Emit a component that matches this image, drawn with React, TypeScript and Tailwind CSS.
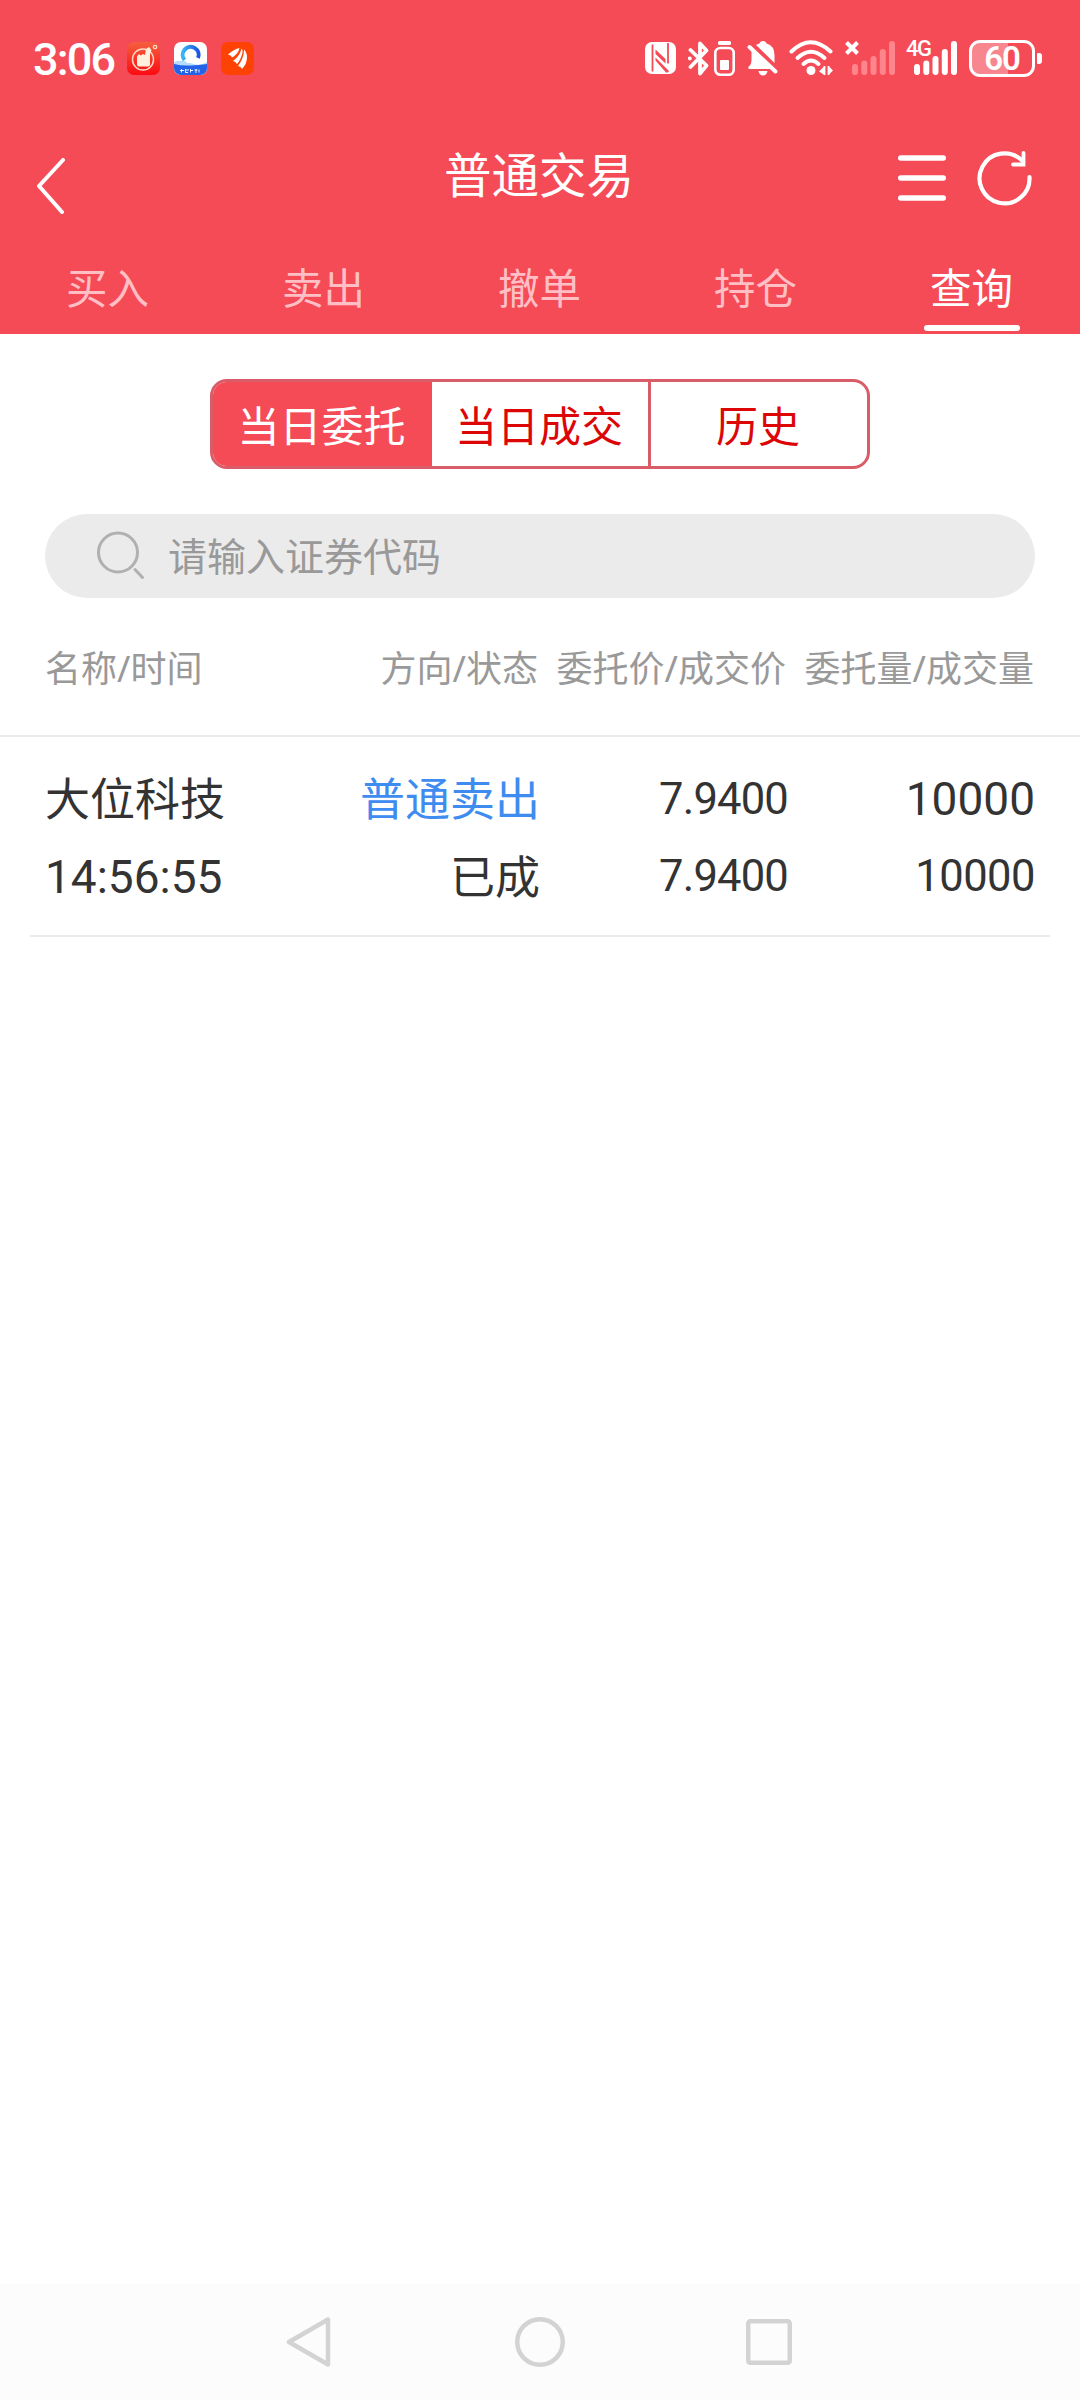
import { useState } from 'react';
import clsx from 'clsx';

interface Order {
    name: string;
    time: string;
    direction: string;
    status: string;
    orderPrice: string;
    dealPrice: string;
    orderAmount: string;
    dealAmount: string;
}

const tabs = ['买入', '卖出', '撤单', '持仓', '查询'];

const segments = ['当日委托', '当日成交', '历史'];

const orders: Order[] = [
    {
        name: '大位科技',
        time: '14:56:55',
        direction: '普通卖出',
        status: '已成',
        orderPrice: '7.9400',
        dealPrice: '7.9400',
        orderAmount: '10000',
        dealAmount: '10000',
    },
];

const SignalBars = ({ className }: { className?: string }) => (
    <svg width="43" height="34" viewBox="0 0 43 34" fill="currentColor" className={className}>
        <rect x="0" y="23" width="6" height="11" rx="3" />
        <rect x="9.3" y="19.5" width="6" height="14.5" rx="3" />
        <rect x="18.5" y="15" width="6" height="19" rx="3" />
        <rect x="27.8" y="8" width="6" height="26" rx="3" />
        <rect x="37" y="0" width="6" height="34" rx="3" />
    </svg>
);

function StatusBar() {
    return (
        <div className="flex h-[116px] items-center justify-between pl-[33px] pr-[38px] font-['Roboto',sans-serif]">
            <div className="flex items-center">
                <span className="w-[94px] pt-[2px] text-[45px] font-medium leading-none tracking-[-1.8px]">3:06</span>

                {/* App notification icons */}
                <svg width="33" height="33" viewBox="0 0 33 33">
                    <defs>
                        <linearGradient id="redApp" x1="0" y1="0" x2="0" y2="1">
                            <stop offset="0" stopColor="#f4603f" />
                            <stop offset="1" stopColor="#fb0a12" />
                        </linearGradient>
                    </defs>
                    <rect width="33" height="33" rx="7" fill="url(#redApp)" />
                    <circle cx="16" cy="17.5" r="10.5" fill="none" stroke="#ffd9c4" strokeWidth="1.5" />
                    <path d="M10 14.5 12 12l1.500 1.500L16 12l2 1 1-6 3-2 2.500 3-1.500 3.500v11q0 2-2 2H12q-2 0-2-2z" fill="#fff0dc" />
                    <circle cx="28" cy="5" r="1.700" fill="none" stroke="#ffe0d0" strokeWidth="1.200" />
                </svg>
                <svg width="33" height="33" viewBox="0 0 33 33" className="ml-[14px]">
                    <defs>
                        <clipPath id="blueAppClip">
                            <rect width="33" height="33" rx="7" />
                        </clipPath>
                        <linearGradient id="ring" x1="0" y1="0" x2="1" y2="0">
                            <stop offset="0" stopColor="#38b6f5" />
                            <stop offset="1" stopColor="#1d55e0" />
                        </linearGradient>
                    </defs>
                    <g clipPath="url(#blueAppClip)">
                        <rect width="33" height="33" fill="#fff" />
                        <path d="M0 20q8-3 16.500 1T33 20v13H0z" fill="#b5dcfb" />
                        <path d="M0 22q8 2 16.500 1.500T33 22V33H0z" fill="#2462e8" />
                        <path d="M10.500 18a8 8 0 1 1 13.500-2" fill="none" stroke="url(#ring)" strokeWidth="4" />
                        <path d="M13 21a3.300 3.300 0 0 1 1-5.500 4.500 4.500 0 0 1 8.500.5 2.800 2.800 0 0 1 1 5z" fill="#fff" />
                        <path d="M7.500 27v3.500M6 28.500h4M11.500 27v3.500h2.500M12 28h3M16.500 27v3.500M16.500 28.500h2.500M20.500 28h3M22 27v4M25 27.500v3" stroke="#fff" strokeWidth=".9" fill="none" />
                    </g>
                </svg>
                <svg width="33" height="33" viewBox="0 0 33 33" className="ml-[14px]">
                    <rect width="33" height="33" rx="7" fill="#fe4203" />
                    <path d="M7 12.500q6-5.500 11.500-6.500-1 6-7.500 9.500-1-2.500-4-3z" fill="#fff" />
                    <path d="M12 19q7-5 8.500-12.500 1.500 1 1 4-1.500 7-5.500 11.500-1.500-2.500-4-3z" fill="#fff" />
                    <path d="M17 24q6-8 6-16.500 3 3 3 7.500 0 7-5 12-1-2.500-4-3z" fill="#fff" />
                </svg>
            </div>

            <div className="flex items-center">
                {/* NFC */}
                <svg width="31" height="32" viewBox="0 0 31 32">
                    <rect width="31" height="32" rx="7" fill="#fff" />
                    <path d="M7.500 2.500v27M23 1v20.500" stroke="#f54b57" strokeWidth="1.800" fill="none" />
                    <path d="M10.500 7.500 20.500 17v4.500l-10-9.500zM10.500 15.500 24 29l-1 1.500h-2L10.500 18.500z" fill="#f54b57" />
                </svg>
                {/* Bluetooth */}
                <svg width="22" height="35" viewBox="0 0 22 35" fill="none" stroke="#fff" strokeWidth="3.800" strokeLinejoin="round" strokeLinecap="round" className="ml-3">
                    <path d="m2.500 9 16 15.500-6.500 8V2.500l6.500 7L2.500 26" />
                    <path d="M1.800 17.500h.1" />
                </svg>
                <svg width="21" height="35" viewBox="0 0 21 35" className="ml-1">
                    <rect x="4" width="13" height="4" rx="1.500" fill="#fff" />
                    <rect x="1.300" y="7" width="18.400" height="26.700" rx="5" fill="none" stroke="#fff" strokeWidth="2.600" />
                    <rect x="6" y="19" width="9" height="10" rx="1" fill="#fff" />
                </svg>
                {/* Muted bell */}
                <svg width="31" height="35" viewBox="0 0 31 35" className="ml-3">
                    <path d="M4.500 9.500 24 28H2q-1.500-2 0-2.500 2.500-2 2.500-6z" fill="#fff" />
                    <path d="M9 4q2-1.500 3.500-1.500Q13 0 16 0t3.500 2.500q8 2 8 12v7.500z" fill="#fff" />
                    <path d="M11.500 30h9q-1 4.500-4.500 4.500t-4.500-4.500z" fill="#fff" />
                    <path d="m2.500 6 26 24.500" stroke="#fff" strokeWidth="4" strokeLinecap="round" />
                </svg>
                {/* Wifi */}
                <svg width="44" height="36" viewBox="0 0 44 36" fill="none" stroke="#fff" strokeWidth="4" strokeLinecap="round" className="ml-[11px]">
                    <path d="M2.500 11.500q19-18.500 39 0" />
                    <path d="M8.500 18q13.500-12.500 27 0" />
                    <path d="M14.500 24q7.500-7 15 0" />
                    <circle cx="22" cy="30.500" r="4.500" fill="#fff" stroke="none" />
                    <path d="M30 31.500 35.500 26v9zM44 30.500 39.500 26v9z" fill="#fff" stroke="none" />
                    <path d="M35.500 26v9M39.500 26v9" strokeWidth="1.800" strokeLinecap="butt" />
                </svg>
                {/* No SIM */}
                <div className="ml-3 flex items-end">
                    <svg width="14" height="14" viewBox="0 0 14 14" stroke="#fff" strokeWidth="4" className="-mr-[7px] self-start">
                        <path d="m1.500 1.500 11 11M12.500 1.500l-11 11" />
                    </svg>
                    <SignalBars className="text-[#ff858d]" />
                </div>
                {/* 4G */}
                <div className="relative ml-[19px]">
                    <SignalBars className="text-white" />
                    <span className="absolute -left-[8px] -top-[1px] text-[22px] font-medium leading-[18px] tracking-[-1.5px]">4G</span>
                </div>
                {/* Battery */}
                <div className="ml-3 flex items-center gap-[2px]">
                    <div className="flex h-[37px] w-[66px] items-center justify-center rounded-[11px] border-[3px] border-white bg-linear-to-r from-[#f8868e] from-60% to-transparent to-60% text-[33px] font-semibold leading-none tracking-[-1px]">
                        60
                    </div>
                    <div className="h-[11px] w-[5px] rounded-r-[3px] rounded-l-[1px] bg-white" />
                </div>
            </div>
        </div>
    );
}

function TitleBar() {
    return (
        <div className="grid h-[120px] grid-cols-[1fr_auto_1fr] items-center px-9">
            <button aria-label="返回" className="mt-5 justify-self-start">
                <svg width="30" height="56" viewBox="0 0 30 56" fill="none" stroke="#fff" strokeWidth="4" strokeLinecap="round" strokeLinejoin="round">
                    <path d="M27 2 3 28l23 26" />
                </svg>
            </button>
            <h1 className="pb-[2px] pr-[2px] text-[47.5px] leading-none">普通交易</h1>
            <div className="mr-[11px] mt-1 flex items-center gap-[31px] justify-self-end">
                <svg width="48" height="46" viewBox="0 0 48 46" stroke="#fff" strokeWidth="5.500" strokeLinecap="round">
                    <path d="M2.750 3h42.500M2.750 23h42.500M2.750 43h42.500" />
                </svg>
                <svg width="56" height="56" viewBox="0 0 56 56" fill="none" stroke="#fff" strokeWidth="4.200" strokeLinecap="round">
                    <path d="M52.500 27A25 25 0 1 1 45 10.500" />
                    <path d="M46.500 3v11.500H36" strokeWidth="3.800" />
                </svg>
            </div>
        </div>
    );
}

export default function App() {
    const [activeTab, setActiveTab] = useState(4);
    const [activeSegment, setActiveSegment] = useState(0);

    return (
        <div className="flex h-[2400px] w-[1080px] flex-col bg-white font-['Noto_Sans','Noto_Sans_CJK_SC',sans-serif] text-[#333333]">
            <header className="h-[334px] bg-[#f54b57] text-white">
                <StatusBar />
                <TitleBar />
                <nav className="grid h-[98px] grid-cols-5">
                    {tabs.map((tab, index) => (
                        <button
                            key={tab}
                            onClick={() => setActiveTab(index)}
                            className={clsx('flex flex-col items-center justify-end pb-[3px]', index !== activeTab && 'text-[#ffbfc5]')}
                        >
                            <span className="pr-px text-[41.5px] leading-[60px]">{tab}</span>
                            <span className={clsx('mt-[7px] h-[6px] w-24 rounded-full', index === activeTab && 'bg-white')} />
                        </button>
                    ))}
                </nav>
            </header>

            <main className="flex-1">
                {/* Segmented control */}
                <div className="mx-auto mt-[45px] grid h-[90px] w-[660px] grid-cols-[219px_216px_219px] overflow-hidden rounded-[17px] border-[3px] border-[#d85d68]">
                    {segments.map((segment, index) => (
                        <button
                            key={segment}
                            onClick={() => setActiveSegment(index)}
                            className={clsx(
                                'pr-[2px] pt-[3px] text-[42px] leading-[81px]',
                                index > 1 && 'border-l-[3px] border-[#d85d68]',
                                index === activeSegment ? 'bg-[#f54b57] text-white' : 'text-[#dc0606]'
                            )}
                        >
                            {segment}
                        </button>
                    ))}
                </div>

                {/* Search */}
                <div className="mx-[45px] mt-[45px] flex h-[84px] items-center rounded-full bg-[#ebebeb] pl-[51px]">
                    <svg width="50" height="50" viewBox="0 0 50 50" fill="none" stroke="#b0b0b0" strokeWidth="3" strokeLinecap="round">
                        <circle cx="22" cy="21.500" r="19.500" />
                        <path d="m39 38.500 7.500 8" />
                    </svg>
                    <span className="ml-[22px] pb-[2px] text-[39px] leading-none text-[#999999]">请输入证券代码</span>
                </div>

                <div className="mt-[46px] grid h-[93px] grid-cols-[243px_250px_248px_248px] border-b-2 border-[#ebebeb] px-[45px] pt-[2px] text-[36px] leading-[46px] text-[#999999] *:whitespace-nowrap">
                    <span>名称/时间</span>
                    <span className="text-right">方向/状态</span>
                    <span className="text-right">委托价/成交价</span>
                    <span className="text-right">委托量/成交量</span>
                </div>

                {orders.map((order) => (
                    <div
                        key={order.time}
                        className="mx-[30px] grid h-[200px] grid-cols-[243px_252px_248px_247px] content-start gap-y-[17px] border-b-2 border-[#ebebeb] px-[15px] pt-8 text-[45px] leading-[60px]"
                    >
                        <span>{order.name}</span>
                        <span className="text-right text-[#3f8cf0]">{order.direction}</span>
                        <span className="pt-px text-right font-['Roboto'] text-[43.5px] tracking-[-0.8px]">{order.orderPrice}</span>
                        <span className="text-right font-['Roboto'] text-[46px]">{order.orderAmount}</span>
                        <span className="font-['Roboto'] text-[46px]">{order.time}</span>
                        <span className="text-right">{order.status}</span>
                        <span className="text-right font-['Roboto'] text-[43.5px] tracking-[-0.8px]">{order.dealPrice}</span>
                        <span className="text-right font-['Roboto'] text-[43.5px] tracking-[-0.5px]">{order.dealAmount}</span>
                    </div>
                ))}
            </main>

            {/* System navigation */}
            <footer className="flex h-[116px] items-center bg-[#fcfcfc] pl-[286px]">
                <svg width="45" height="52" viewBox="0 0 45 52" fill="none" stroke="#d3d3d3" strokeWidth="4.500" strokeLinejoin="round">
                    <path d="M42 3.500v45L3 26z" />
                </svg>
                <svg width="50" height="50" viewBox="0 0 50 50" fill="none" stroke="#d3d3d3" strokeWidth="4.500" className="ml-[184px]">
                    <circle cx="25" cy="25" r="22.750" />
                </svg>
                <svg width="46" height="46" viewBox="0 0 46 46" fill="none" stroke="#d3d3d3" strokeWidth="4.500" className="ml-[181px]">
                    <rect x="2.250" y="2.250" width="41.500" height="41.500" rx="2" />
                </svg>
            </footer>
        </div>
    );
}
